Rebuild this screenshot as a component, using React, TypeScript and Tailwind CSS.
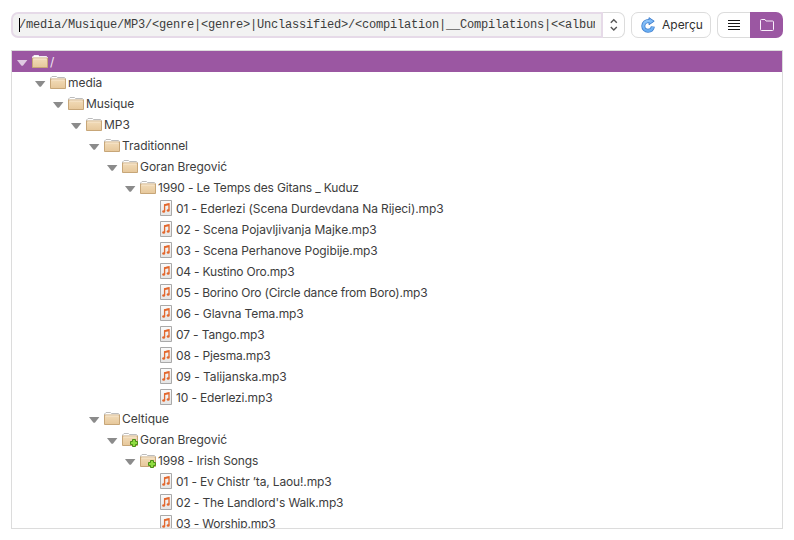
import React from "react";

type Kind = "folder" | "added" | "file";
type Entry = { depth: number; kind: Kind; label: string; tracking?: number };

const entries: Entry[] = [
  { depth: 0, kind: "folder", label: "/" },
  { depth: 1, kind: "folder", label: "media", tracking: -0.05 },
  { depth: 2, kind: "folder", label: "Musique", tracking: -0.05 },
  { depth: 3, kind: "folder", label: "MP3" },
  { depth: 4, kind: "folder", label: "Traditionnel", tracking: -0.06 },
  { depth: 5, kind: "folder", label: "Goran Bregović", tracking: -0.06 },
  { depth: 6, kind: "folder", label: "1990 - Le Temps des Gitans _ Kuduz", tracking: -0.16 },
  { depth: 7, kind: "file", label: "01 - Ederlezi (Scena Durdevdana Na Rijeci).mp3", tracking: -0.08 },
  { depth: 7, kind: "file", label: "02 - Scena Pojavljivanja Majke.mp3", tracking: -0.03 },
  { depth: 7, kind: "file", label: "03 - Scena Perhanove Pogibije.mp3", tracking: -0.07 },
  { depth: 7, kind: "file", label: "04 - Kustino Oro.mp3", tracking: -0.21 },
  { depth: 7, kind: "file", label: "05 - Borino Oro (Circle dance from Boro).mp3", tracking: -0.19 },
  { depth: 7, kind: "file", label: "06 - Glavna Tema.mp3", tracking: -0.09 },
  { depth: 7, kind: "file", label: "07 - Tango.mp3", tracking: -0.13 },
  { depth: 7, kind: "file", label: "08 - Pjesma.mp3", tracking: -0.17 },
  { depth: 7, kind: "file", label: "09 - Talijanska.mp3", tracking: -0.06 },
  { depth: 7, kind: "file", label: "10 - Ederlezi.mp3", tracking: -0.15 },
  { depth: 4, kind: "folder", label: "Celtique" },
  { depth: 5, kind: "added", label: "Goran Bregović", tracking: -0.06 },
  { depth: 6, kind: "added", label: "1998 - Irish Songs", tracking: -0.15 },
  { depth: 7, kind: "file", label: "01 - Ev Chistr ’ta, Laou!.mp3", tracking: -0.15 },
  { depth: 7, kind: "file", label: "02 - The Landlord's Walk.mp3", tracking: -0.15 },
  { depth: 7, kind: "file", label: "03 - Worship.mp3", tracking: -0.2 },
];

function Folder({ added, selected }: { added: boolean; selected: boolean }) {
  return (
    <svg width="18" height="16" viewBox="0 0 18 16" className="shrink-0">
      <path d="M.5 12.5V3L2 1.5H6.500l1 1H14.500l1 1v9z" fill="#fff" stroke={selected ? "#f4eef5" : "#bdbdbd"} />
      <path d="M.5 4h15v9.500H.5z" fill="url(#folder-fill)" stroke="#c7a678" />
      <path d="M1.500 5h13" stroke="#f7e8d0" />
      {added && (
        <path
          d="M10.500 7.500h3v2h2v3h-2v2h-3v-2h-2v-3h2z"
          fill="#8fdc40"
          stroke="#4b8d16"
        />
      )}
    </svg>
  );
}

function MusicFile() {
  return (
    <svg width="16" height="16" viewBox="0 0 16 16" className="shrink-0">
      <path d="M.5.5h11v15H.5z" fill="url(#page-fill)" stroke="#a9a9a9" />
      <path d="M4.600 11V4.800L9 3.900V10" fill="none" stroke="#e2672d" strokeWidth="1.3" />
      <path d="M4.600 5.200 9 4.300" stroke="#e2672d" strokeWidth="1.700" />
      <ellipse cx="3.700" cy="11.500" rx="1.500" ry="1.300" fill="#e2672d" />
      <ellipse cx="8.200" cy="10.500" rx="1.500" ry="1.300" fill="#e2672d" />
    </svg>
  );
}

function Row({ entry, selected }: { entry: Entry; selected: boolean }) {
  const isFile = entry.kind === "file";
  return (
    <div
      className={
        selected
          ? "flex h-[21px] shrink-0 items-start bg-[#9b57a2] text-[#f3eaf4]"
          : "flex h-[21px] shrink-0 items-start text-[#3d3d3d]"
      }
      style={{ paddingLeft: entry.depth * 18 + (isFile ? 22 : 5), letterSpacing: entry.tracking }}
    >
      {!isFile && (
        <svg width="15" height="21" viewBox="0 0 15 21" className="shrink-0">
          <path d="M0 9h10.400L6.300 14.200q-1.100 1-2.200 0z" fill={selected ? "#dfcae2" : "#8b8b8b"} />
        </svg>
      )}
      <span className={isFile ? "pt-0.5" : "pt-[3px]"}>
        {isFile ? <MusicFile /> : <Folder added={entry.kind === "added"} selected={selected} />}
      </span>
      <span className="whitespace-pre pt-px leading-[20px]">{entry.label}</span>
    </div>
  );
}

function Toolbar() {
  return (
    <div className="flex h-[26px] shrink-0 gap-1.5">
      <div className="flex w-[614px]">
        <div className="flex w-[592px] items-center overflow-hidden rounded-l-[7px] border-2 border-[#e6dae8] bg-[#f2f2f2] pr-[6px] pl-1.5">
          <span className="h-[14px] w-px shrink-0 bg-black" />
          <span className="-ml-px overflow-hidden whitespace-pre font-['Liberation_Mono',monospace] text-[12px] leading-[18px] tracking-[-0.2px] text-[#3c3c3c]">
            {"/media/Musique/MP3/<genre|<genre>|Unclassified>/<compilation|__Compilations|<<album"}
          </span>
        </div>
        <button className="flex w-[22px] items-center justify-center rounded-r-[7px] border border-l-0 border-[#dcdcdc] bg-white">
          <svg width="10" height="14" viewBox="0 0 10 14" fill="none" stroke="#555" strokeWidth="1.4">
            <path d="m1.800 4.800 3-3 3 3M1.800 9l3 3 3-3" />
          </svg>
        </button>
      </div>
      <button className="flex w-[80px] items-center gap-[6px] rounded-[7px] border border-[#dcdcdc] bg-white pl-[9px] text-[#303030]">
        <svg width="15" height="16" viewBox="0 0 15 16" className="shrink-0" fill="none">
          <path d="M8.500 4.100C4.800 3.700 2.300 6 2.300 9c0 2.700 2 4.700 4.700 4.700 2.600 0 4.500-1.700 4.900-4.200" stroke="#3f7fce" strokeWidth="4" />
          <path d="M8 .7 13.200 4.200 8 7.700z" fill="#7db8f5" stroke="#3f7fce" strokeLinejoin="round" />
          <path d="M9 4.100C4.800 3.700 2.300 6 2.300 9c0 2.700 2 4.700 4.700 4.700 2.500 0 4.400-1.600 4.800-3.700" stroke="url(#refresh-fill)" strokeWidth="2.400" />
        </svg>
        <span className="whitespace-nowrap">Aperçu</span>
      </button>
      <div className="flex w-[66px]">
        <button className="flex w-[33px] items-center justify-center rounded-l-[7px] border border-r-0 border-[#dcdcdc] bg-white">
          <svg width="12" height="12" viewBox="0 0 12 12" stroke="#171717">
            <path d="M0 1.500h12M0 4.500h12M0 7.500h12M0 10.500h12" />
          </svg>
        </button>
        <button className="flex w-[33px] items-center justify-center rounded-r-[7px] bg-[#9b57a2]">
          <svg width="14" height="12" viewBox="0 0 14 12" fill="none" stroke="#f8effa">
            <path d="M.5 10.500V1.500q0-1 1-1h3.500l1 1.500H12.500q1 0 1 1V10.500q0 1-1 1H1.500q-1 0-1-1z" />
          </svg>
        </button>
      </div>
    </div>
  );
}

export default function App() {
  return (
    <div className="flex h-[540px] w-[794px] flex-col gap-3 overflow-hidden bg-white pt-3 pr-[11px] pb-[11px] pl-[11px] font-['Inter',sans-serif] text-[12px]">
      <svg width="0" height="0" className="absolute">
        <defs>
          <linearGradient id="folder-fill" x2="0" y2="1">
            <stop stopColor="#f2dcb9" />
            <stop offset="1" stopColor="#e6c79a" />
          </linearGradient>
          <linearGradient id="page-fill" x2="0" y2="1">
            <stop stopColor="#fbfbfb" />
            <stop offset="1" stopColor="#e4e4e4" />
          </linearGradient>
          <linearGradient id="refresh-fill" x2="0" y2="1">
            <stop stopColor="#8cc3f9" />
            <stop offset="1" stopColor="#69adf2" />
          </linearGradient>
        </defs>
      </svg>
      <Toolbar />
      <div className="flex w-[772px] flex-1 flex-col overflow-hidden border border-[#dcdcdc] bg-white">
        {entries.map((entry, index) => (
          <Row key={index} entry={entry} selected={index === 0} />
        ))}
      </div>
    </div>
  );
}
